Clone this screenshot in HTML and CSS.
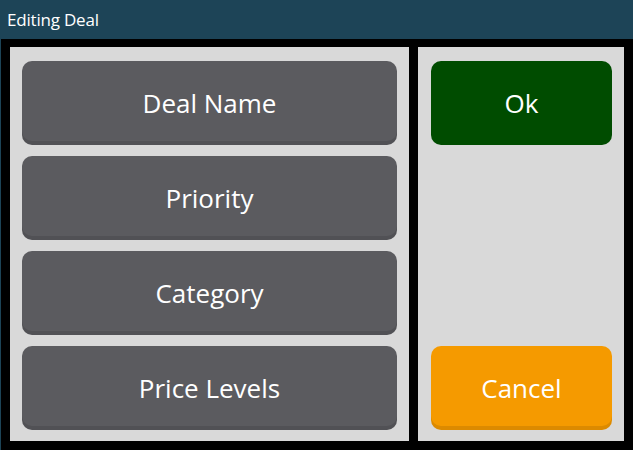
FILE: index.html
```html
<!DOCTYPE html>
<html lang="en">

<head>
    <meta charset="UTF-8" />
    <meta name="viewport" content="width=device-width, initial-scale=1.0" />
    <title>Editing Deal</title>
    <link rel="stylesheet" href="styles.css">
</head>

<body>
    <div class="window">
        <!-- Title bar -->
        <header class="titlebar">Editing Deal</header>

        <main class="body">
            <!-- Fields -->
            <section class="panel fields">
                <button class="btn btn-gray">Deal Name</button>
                <button class="btn btn-gray">Priority</button>
                <button class="btn btn-gray">Category</button>
                <button class="btn btn-gray">Price Levels</button>
            </section>

            <!-- Actions -->
            <section class="panel actions">
                <button class="btn btn-ok">Ok</button>
                <button class="btn btn-cancel">Cancel</button>
            </section>
        </main>
    </div>
</body>

</html>
```

FILE: styles.css
```css
* {
    box-sizing: border-box;
    margin: 0;
    padding: 0;
    font-family: 'Segoe UI', 'Open Sans', sans-serif;
}

body {
    width: 633px;
    height: 450px;
    background-color: #000;
    overflow: hidden;
}

.window {
    height: 450px;
    display: flex;
    flex-direction: column;
    border-left: 1px solid #1d4457;
}

.titlebar {
    height: 39px;
    background-color: #1d4457;
    color: #fff;
    font-size: 17px;
    line-height: 39px;
    padding-left: 6px;
    letter-spacing: -0.2px;
}

.body {
    flex: 1;
    display: flex;
    gap: 9px;
    padding: 8px 9px 10px 9px;
}

.panel {
    background-color: #d9d9d9;
    display: flex;
    flex-direction: column;
}

.fields {
    width: 399px;
    gap: 11px;
    padding: 14px 12px 11px 12px;
}

.actions {
    flex: 1;
    justify-content: space-between;
    padding: 14px 12px 11px 13px;
}

.btn {
    height: 84px;
    border: none;
    border-radius: 10px;
    color: #fff;
    font-size: 26px;
    letter-spacing: 0;
    box-shadow: inset 0 -4px 0 rgba(0, 0, 0, 0.1);
    cursor: pointer;
}

.btn-gray {
    background-color: #5b5b5f;
}

.btn-ok {
    background-color: #004c00;
    box-shadow: none;
}

.btn-cancel {
    background-color: #f59a00;
}
```
